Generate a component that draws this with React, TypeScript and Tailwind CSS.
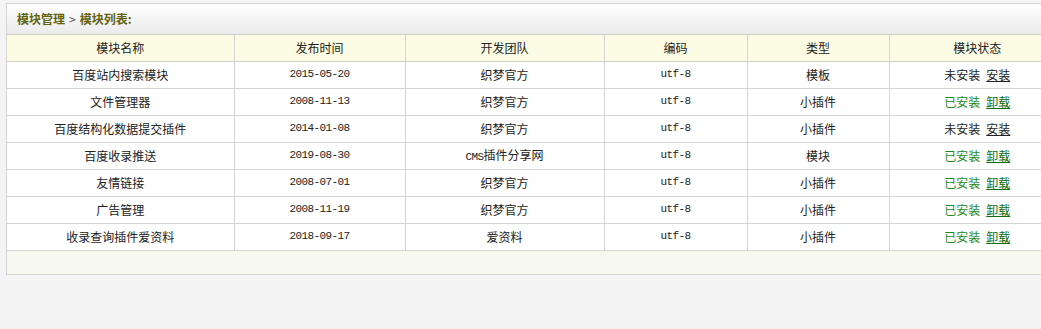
import React from "react";

type Row = { name: string; date: string; team: string; enc: string; type: string; installed: boolean };

const rows: Row[] = [
  { name: "百度站内搜索模块", date: "2015-05-20", team: "织梦官方", enc: "utf-8", type: "模板", installed: false },
  { name: "文件管理器", date: "2008-11-13", team: "织梦官方", enc: "utf-8", type: "小插件", installed: true },
  { name: "百度结构化数据提交插件", date: "2014-01-08", team: "织梦官方", enc: "utf-8", type: "小插件", installed: false },
  { name: "百度收录推送", date: "2019-08-30", team: "CMS插件分享网", enc: "utf-8", type: "模块", installed: true },
  { name: "友情链接", date: "2008-07-01", team: "织梦官方", enc: "utf-8", type: "小插件", installed: true },
  { name: "广告管理", date: "2008-11-19", team: "织梦官方", enc: "utf-8", type: "小插件", installed: true },
  { name: "收录查询插件爱资料", date: "2018-09-17", team: "爱资料", enc: "utf-8", type: "小插件", installed: true },
];

const cjk = "font-['SimSun','Noto_Sans_CJK_SC',sans-serif]";
const mono = "font-['Liberation_Mono',monospace] text-[11px] tracking-[-0.6px]";

export default function App() {
  return (
    <div className={`min-h-[329px] w-[1041px] overflow-hidden bg-[#f4f4f4] pl-[6px] pt-[3px] ${cjk} text-[12px] text-[#222]`}>
      <div className="w-[1060px] border border-[#d4d4d4] bg-white">
        <div className="flex h-[31px] items-center border-b border-[#cdcdcd] bg-gradient-to-b from-white to-[#ebebeb] pl-[10px] text-[12px] font-bold text-[#62620f]">
          <span>模块管理</span>
          <span className="mx-[4px] font-normal text-[#555]">&gt;</span>
          <span>模块列表:</span>
        </div>
        <table className="w-full table-fixed border-collapse">
          <colgroup>
            <col className="w-[227px]" />
            <col className="w-[171px]" />
            <col className="w-[199px]" />
            <col className="w-[143px]" />
            <col className="w-[142px]" />
            <col />
          </colgroup>
          <thead>
            <tr className="h-[26px] bg-[#fbfce3]">
              {["模块名称", "发布时间", "开发团队", "编码", "类型", "模块状态"].map((h, i) => (
                <th
                  key={h}
                  className={`border-b border-[#cfcfcf] p-0 text-center font-normal ${i > 0 ? "border-l" : ""} border-l-[#d6d6d6]`}
                >
                  {h}
                </th>
              ))}
            </tr>
          </thead>
          <tbody>
            {rows.map((r) => (
              <tr key={r.name} className="h-[27px] bg-white">
                <td className="border-b border-[#d4d4d4] p-0 text-center">{r.name}</td>
                <td className={`border-b border-l border-[#d4d4d4] p-0 text-center ${mono}`}>{r.date}</td>
                <td className="border-b border-l border-[#d4d4d4] p-0 text-center">
                  {r.team.startsWith("CMS") ? (
                    <>
                      <span className={mono}>CMS</span>插件分享网
                    </>
                  ) : (
                    r.team
                  )}
                </td>
                <td className={`border-b border-l border-[#d4d4d4] p-0 text-center ${mono}`}>{r.enc}</td>
                <td className="border-b border-l border-[#d4d4d4] p-0 text-center">{r.type}</td>
                <td className="border-b border-l border-[#d4d4d4] p-0 text-center">
                  {r.installed ? (
                    <>
                      <span className="text-[#1f8a1f]">已安装</span>
                      <span className="ml-[6px] text-[#0f6e0f] underline">卸载</span>
                    </>
                  ) : (
                    <>
                      <span>未安装</span>
                      <span className="ml-[6px] underline">安装</span>
                    </>
                  )}
                </td>
              </tr>
            ))}
            <tr className="h-[24px] bg-[#f8f9ee]">
              <td colSpan={6} className="p-0" />
            </tr>
          </tbody>
        </table>
      </div>
    </div>
  );
}
